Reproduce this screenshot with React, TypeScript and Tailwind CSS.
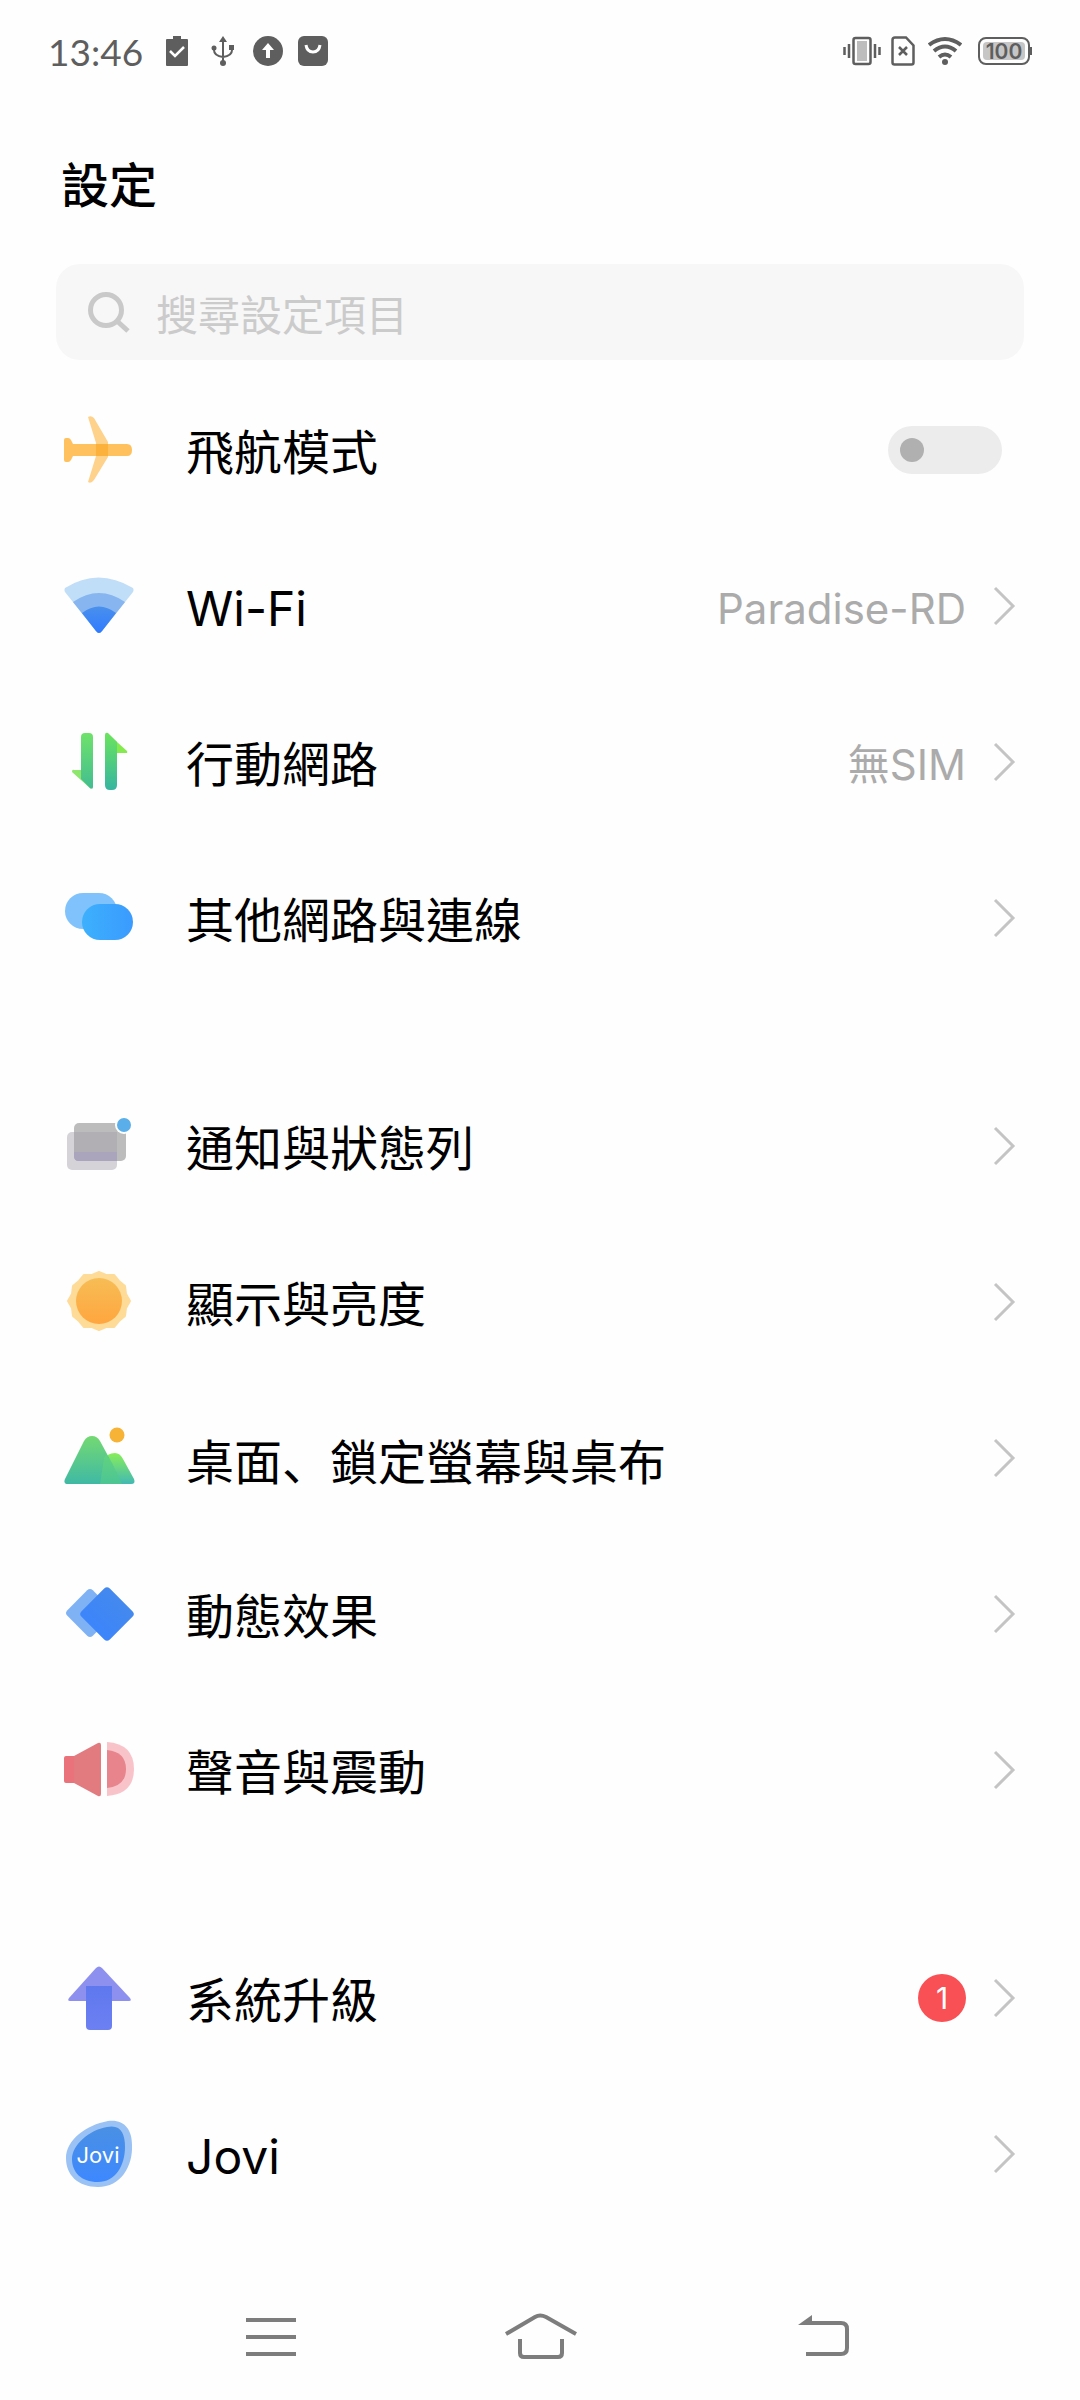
import type { ReactNode } from 'react';

function Gradient({ id, from, to, horizontal = false }: { id: string; from: string; to: string; horizontal?: boolean }) {
  return (
    <linearGradient id={id} x1="0" y1="0" x2={horizontal ? '1' : '0'} y2={horizontal ? '0' : '1'}>
      <stop offset="0" stopColor={from} />
      <stop offset="1" stopColor={to} />
    </linearGradient>
  );
}

function RowIcon({ children }: { children: ReactNode }) {
  return (
    <svg viewBox="0 0 72 72" className="size-[72px] shrink-0" aria-hidden="true">
      {children}
    </svg>
  );
}

const PlaneIcon = () => (
  <RowIcon>
    <path d="M24 3q3-2 6 1l14 24v15L30 66q-3 4-6 2l8-26V29z" fill="#ffd28c" />
    <path d="M2 24q-2 0-2 2v20q0 2 2 2h2q2 0 3-2l2-4h54q5 0 5-6t-5-6H9l-2-4q-1-2-3-2z" fill="#ffc15e" />
    <path d="M32 30h12v12H32z" fill="#fbb13c" />
  </RowIcon>
);

const WifiRowIcon = () => (
  <RowIcon>
    <defs>
      <Gradient id="wifi-core" from="#4a90ec" to="#2f7bff" />
    </defs>
    <path d="M1 18q33-21 68 0 1 2 0 4L38 61q-3 4-6 0L1 22q-1-2 0-4z" fill="#c0def8" />
    <path d="M9 32q26-18 52 0L38 61q-3 4-6 0z" fill="#86b5f0" />
    <path d="M18 43q17-13 34 0L38 61q-3 4-6 0z" fill="url(#wifi-core)" />
  </RowIcon>
);

const MobileIcon = () => (
  <RowIcon>
    <defs>
      <Gradient id="bar-down" from="#6fe26a" to="#42bd91" />
      <Gradient id="bar-up" from="#6be45c" to="#36b5a0" />
    </defs>
    <path d="M10 44q-2-1-2 2l19 17V44z" fill="#8ee66c" />
    <path d="M43 7l20 18q1 2-1 2H43z" fill="#84ea4e" />
    <path d="M17 11q0-4 4-4h4q4 0 4 4v50q0 3-3 1l-9-9z" fill="url(#bar-down)" />
    <path d="M41 9q0-3 3-2l9 9v43q0 5-5 5h-2q-5 0-5-5z" fill="url(#bar-up)" />
  </RowIcon>
);

const ConnectionsIcon = () => (
  <RowIcon>
    <defs>
      <Gradient id="pill-front" from="#3db0fc" to="#3a9bff" horizontal />
    </defs>
    <rect x="1" y="11" width="52" height="36" rx="18" fill="#80c3fc" />
    <rect x="18" y="22" width="51" height="36" rx="18" fill="url(#pill-front)" />
  </RowIcon>
);

const NotificationIcon = () => (
  <RowIcon>
    <rect x="3" y="22" width="50" height="38" rx="5" fill="#d5d3d8" />
    <rect x="10" y="13" width="52" height="38" rx="5" fill="#bdbcbd" />
    <path d="M10 22h43v29H15q-5 0-5-5z" fill="#b1afb3" />
    <path d="M10 42h43v9H15q-5 0-5-5z" fill="#aaa5bd" />
    <circle cx="60" cy="15" r="9" fill="#fff" />
    <circle cx="60" cy="15" r="7" fill="#5aaeea" />
  </RowIcon>
);

const SunIcon = () => (
  <RowIcon>
    <defs>
      <Gradient id="sun-core" from="#f7bd55" to="#ffa63f" />
    </defs>
    <path
      d="M35 6l7 3 8 0 5 6 6 5 1 8 4 7-4 7-1 8-6 5-5 6-8 0-7 3-7-3-8 0-5-6-6-5-1-8-4-7 4-7 1-8 6-5 5-6 8 0z"
      fill="#ffdb98"
      stroke="#ffdb98"
      strokeLinejoin="round"
      strokeWidth="2"
    />
    <circle cx="35" cy="35" r="23" fill="url(#sun-core)" />
  </RowIcon>
);

const WallpaperIcon = () => (
  <RowIcon>
    <defs>
      <Gradient id="peak-large" from="#74d972" to="#3fb9a4" />
      <Gradient id="peak-small" from="#88ee58" to="#42b9b4" />
    </defs>
    <path d="M40 38q3-7 11-7 5 0 8 6l11 20q2 5-3 5H30z" fill="url(#peak-small)" />
    <path d="M20 19q3-5 8-5t8 5l13 24 9 19H4q-5 0-3-5z" fill="url(#peak-large)" />
    <path d="M40 36l2-3q5 5 8 12l8 17H36z" fill="#6be070" opacity=".3" />
    <circle cx="53" cy="13" r="7.500" fill="#f7b335" />
  </RowIcon>
);

const MotionIcon = () => (
  <RowIcon>
    <defs>
      <Gradient id="diamond" from="#4489ee" to="#3c85fb" />
    </defs>
    <rect x="8" y="17" width="36" height="36" rx="4" transform="rotate(45 26 35)" fill="#7fb2f5" />
    <rect x="23" y="16" width="40" height="40" rx="4" transform="rotate(45 43 36)" fill="url(#diamond)" />
  </RowIcon>
);

const SoundIcon = () => (
  <RowIcon>
    <path d="M43 8q27 2 27 27T43 62z" fill="#f9c3ca" />
    <path d="M43 16q19 2 19 19T43 54z" fill="#e8848c" />
    <path d="M2 22h10v27H2q-2 0-2-2V24q0-2 2-2z" fill="#ea727a" />
    <path d="M10 22L34 9q3-1 3 2v49q0 3-3 2L10 49z" fill="#e27b80" />
  </RowIcon>
);

const UpgradeIcon = () => (
  <RowIcon>
    <defs>
      <Gradient id="stem" from="#5f78ee" to="#6c80f2" />
    </defs>
    <path d="M32 6q3-3 6 0l28 30q2 3-1 3H6q-3 0-1-3z" fill="#8d90ee" />
    <path d="M22 24h26v40q0 4-4 4H26q-4 0-4-4z" fill="url(#stem)" />
  </RowIcon>
);

const JoviIcon = () => (
  <RowIcon>
    <defs>
      <Gradient id="jovi" from="#4a90e4" to="#3d88ff" />
    </defs>
    <path d="M44 3C60 1 68 11 68 27 69 48 57 69 34 69 14 69 2 57 2 40 2 22 22 7 44 3z" fill="#9ac2f4" />
    <path d="M43 9C57 6 61 16 61 29 61 48 51 64 34 64 17 64 8 54 8 41 8 27 25 12 43 9z" fill="url(#jovi)" />
    <text x="34" y="45" textAnchor="middle" fontFamily="Inter, sans-serif" fontSize="22" fill="#fff">
      Jovi
    </text>
  </RowIcon>
);

const Chevron = () => (
  <svg viewBox="0 0 24 40" className="h-10 w-6 shrink-0" fill="none" stroke="#c4c4c4" strokeWidth="3" aria-hidden="true">
    <path d="M3 2l18 18L3 38" />
  </svg>
);

type Item = { id: string; label: ReactNode; icon: ReactNode; value?: string; badge?: number };

const groups: Item[][] = [
  [
    { id: 'wifi', label: 'Wi-Fi', icon: <WifiRowIcon />, value: 'Paradise-RD' },
    { id: 'mobile', label: '行動網路', icon: <MobileIcon />, value: '無SIM' },
    { id: 'connections', label: '其他網路與連線', icon: <ConnectionsIcon /> },
  ],
  [
    { id: 'notifications', label: '通知與狀態列', icon: <NotificationIcon /> },
    { id: 'display', label: '顯示與亮度', icon: <SunIcon /> },
    {
      id: 'wallpaper',
      label: (
        <>
          桌面<span lang="ja" className="font-['Noto_Sans_CJK_JP',sans-serif]">、</span>鎖定螢幕與桌布
        </>
      ),
      icon: <WallpaperIcon />,
    },
    { id: 'motion', label: '動態效果', icon: <MotionIcon /> },
    { id: 'sound', label: '聲音與震動', icon: <SoundIcon /> },
  ],
  [
    { id: 'upgrade', label: '系統升級', icon: <UpgradeIcon />, badge: 1 },
    { id: 'jovi', label: 'Jovi', icon: <JoviIcon /> },
  ],
];

function SettingRow({ item }: { item: Item }) {
  return (
    <li>
      <a href="#" className="flex h-[156px] items-center pr-16 pl-16">
        {item.icon}
        <span className="ml-[50px] flex-1 pt-[6px] text-[48px] leading-[72px]">{item.label}</span>
        {item.value && <span className="pt-[6px] text-[42px] leading-[60px] text-[#ababab]">{item.value}</span>}
        {item.badge && (
          <span className="flex size-12 items-center justify-center rounded-full bg-[#f95055] text-[30px] leading-none text-white">
            {item.badge}
          </span>
        )}
        <span className="ml-[26px]">
          <Chevron />
        </span>
      </a>
    </li>
  );
}

function StatusBar() {
  return (
    <header className="flex h-[102px] items-center justify-between pr-12 pl-12 text-[#5e5e5e]">
      <div className="flex items-center">
        <time className="w-[118px] font-['Lato'] text-[37px] leading-none">13:46</time>
        <svg viewBox="0 0 22 30" className="h-[30px] w-[22px]" aria-hidden="true">
          <path d="M1 3h6V0h8v3h6q1 0 1 1v25q0 1-1 1H1q-1 0-1-1V4q0-1 1-1z" fill="currentColor" />
          <path d="M4 15l5 5 9-9" fill="none" stroke="#fff" strokeWidth="2.500" />
        </svg>
        <svg viewBox="0 0 24 30" className="ml-[23px] h-[30px] w-6" fill="none" stroke="currentColor" strokeWidth="2" aria-hidden="true">
          <path d="M12 3v24M3 12v2q0 6 9 7 9-1 9-7v-2" />
          <path d="M12 0l4 6H8z" fill="currentColor" stroke="none" />
          <circle cx="12" cy="27" r="3" fill="currentColor" stroke="none" />
          <circle cx="3" cy="12" r="2.500" fill="currentColor" stroke="none" />
          <path d="M18 9h5v5h-5z" fill="currentColor" stroke="none" />
        </svg>
        <svg viewBox="0 0 30 30" className="ml-[18px] size-[30px]" aria-hidden="true">
          <circle cx="15" cy="15" r="15" fill="currentColor" />
          <path d="M15 7l6 7h-4v8h-4v-8H9z" fill="#fff" />
        </svg>
        <svg viewBox="0 0 30 30" className="ml-[15px] size-[30px]" aria-hidden="true">
          <rect width="30" height="30" rx="6" fill="currentColor" />
          <path d="M8 9q1 7 7 7t7-7" fill="none" stroke="#fff" strokeWidth="3" />
        </svg>
      </div>
      <div className="flex items-center">
        <svg viewBox="0 0 38 30" className="h-[30px] w-[38px]" fill="none" stroke="currentColor" aria-hidden="true">
          <rect x="10.500" y="2" width="17" height="26" rx="2" strokeWidth="2.500" />
          <path d="M14 5h10v20H14z" fill="#bdbdbd" stroke="none" />
          <path d="M6 8v14M32 8v14" strokeWidth="2.500" />
          <path d="M1.500 11v8M36.500 11v8" strokeWidth="2.500" />
        </svg>
        <svg viewBox="0 0 24 30" className="ml-[10px] h-[30px] w-6" fill="none" stroke="currentColor" strokeWidth="2.500" aria-hidden="true">
          <path d="M4 1.500h11l7.500 8v17q0 2-2 2h-17q-2 0-2-2V4q0-2.500 2.500-2.500z" />
          <path d="M8 11l8 8M16 11l-8 8" />
        </svg>
        <svg viewBox="0 0 34 30" className="ml-[13px] h-[30px] w-[34px]" fill="none" stroke="currentColor" strokeWidth="4" aria-hidden="true">
          <path d="M1 9q16-12 32 0M6 15q11-9 22 0M11 21q6-5 12 0" />
          <circle cx="17" cy="26" r="3" fill="currentColor" stroke="none" />
        </svg>
        <div className="ml-4 flex items-center">
          <span className="flex h-7 w-[52px] items-center justify-center rounded-lg border-2 border-[#5e5e5e] p-[3px]">
            <span className="flex h-full w-full items-center justify-center rounded-sm bg-[#c6c6c6] text-[21px] leading-none font-semibold">
              100
            </span>
          </span>
          <span className="h-2 w-[2px] bg-[#5e5e5e]" />
        </div>
      </div>
    </header>
  );
}

function NavBar() {
  const icon = 'h-12 w-24';
  return (
    <nav className="mt-auto grid h-[126px] shrink-0 grid-cols-3 items-center justify-items-center px-[12.5%] text-[#7d7d7d]">
      <button type="button" aria-label="最近使用">
        <svg viewBox="0 0 96 48" className={icon} fill="none" stroke="currentColor" strokeWidth="4">
          <path d="M24 7h50M24 24h50M24 41h50" />
        </svg>
      </button>
      <button type="button" aria-label="主畫面">
        <svg viewBox="0 0 96 48" className={icon} fill="none" stroke="currentColor" strokeWidth="4" strokeLinejoin="round">
          <path d="M14 21L43 4q5-3 11 0l30 17M28 26v14q0 4 4 4h34q4 0 4-4V26" />
        </svg>
      </button>
      <button type="button" aria-label="返回">
        <svg viewBox="0 0 96 48" className={icon} fill="none" stroke="currentColor" strokeWidth="4">
          <path d="M42 10h37q6 0 6 6v19q0 6-6 6H44" />
          <path d="M36 12L50 2v10z" fill="currentColor" stroke="none" />
        </svg>
      </button>
    </nav>
  );
}

export default function App() {
  return (
    <div
      lang="zh-Hant"
      className="flex min-h-screen flex-col bg-[#fefefe] font-['Inter','Noto_Sans_CJK_TC',sans-serif] text-black"
    >
      <StatusBar />
      <main>
        <div className="flex h-[162px] items-center px-[61px]">
          <h1 className="pt-[6px] text-[48px] leading-[72px] font-medium">設定</h1>
        </div>
        <div className="mx-14 mb-3 flex h-24 items-center rounded-[24px] bg-[#f7f7f7] pl-8">
          <svg viewBox="0 0 42 42" className="size-[42px]" fill="none" stroke="#c9c9c9" strokeWidth="5" aria-hidden="true">
            <circle cx="18" cy="19" r="15.500" />
            <path d="M29 30l11 10" />
          </svg>
          <input
            type="search"
            aria-label="搜尋設定項目"
            placeholder="搜尋設定項目"
            className="ml-[26px] min-w-0 flex-1 bg-transparent pt-2 text-[42px] leading-[60px] outline-none placeholder:text-[#cbcbcb]"
          />
        </div>
        <label className="flex h-[156px] items-center pr-[78px] pl-16">
          <PlaneIcon />
          <span className="ml-[50px] flex-1 pt-[6px] text-[48px] leading-[72px]">飛航模式</span>
          <input
            type="checkbox"
            role="switch"
            className="flex h-12 w-[114px] appearance-none items-center rounded-full bg-[#ececec] px-3 before:size-6 before:rounded-full before:bg-[#b0b0b0] before:content-[''] checked:justify-end"
          />
        </label>
        <div className="flex flex-col gap-[72px]">
          {groups.map((group) => (
            <ul key={group[0].id}>
              {group.map((item) => (
                <SettingRow key={item.id} item={item} />
              ))}
            </ul>
          ))}
        </div>
      </main>
      <NavBar />
    </div>
  );
}
